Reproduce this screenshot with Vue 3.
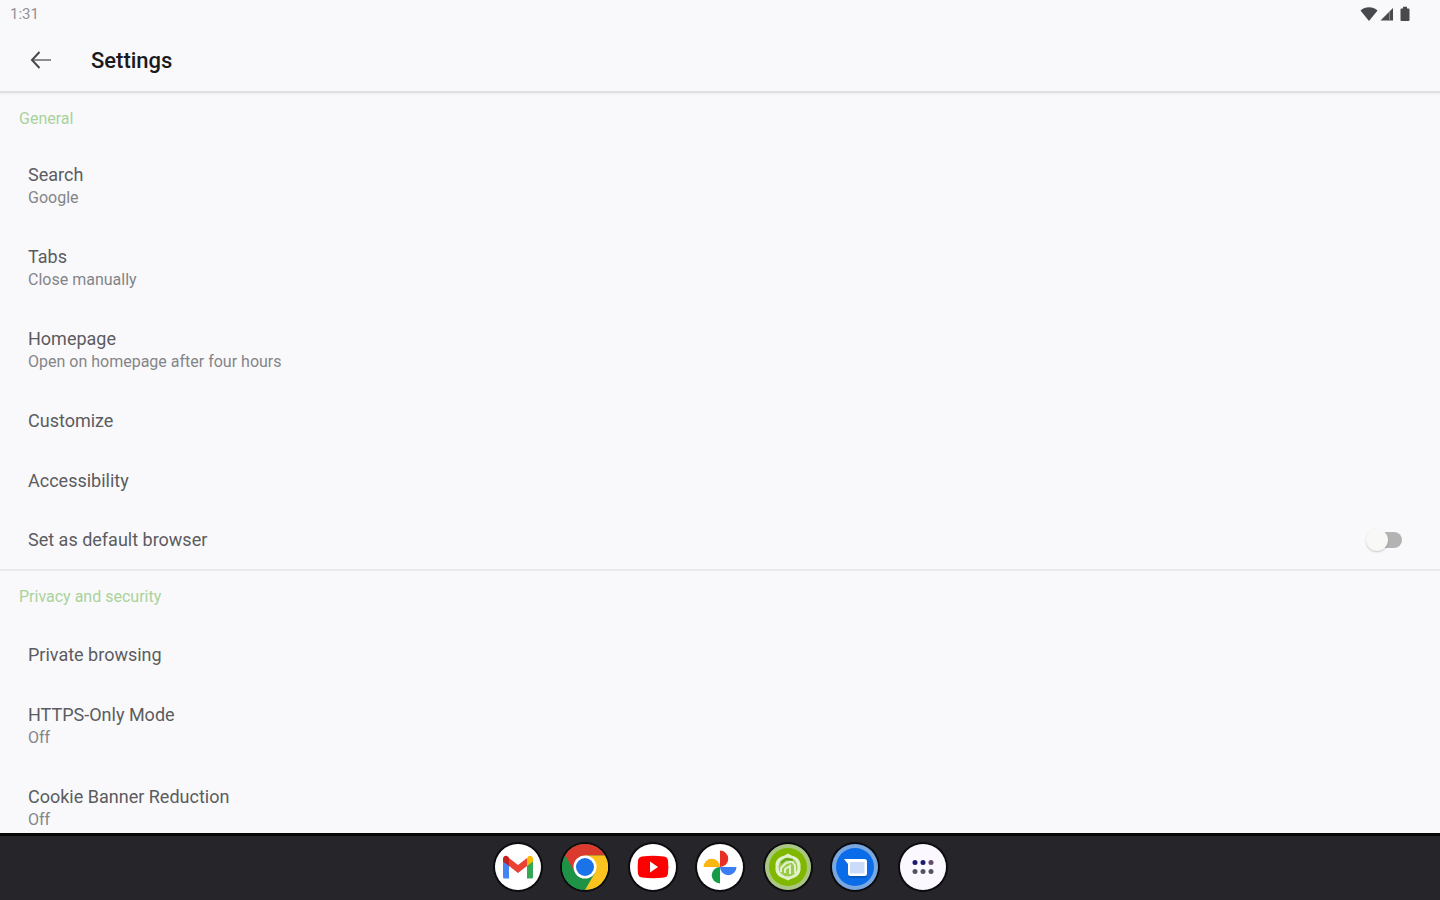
<script setup>
import { ref } from 'vue'

const isDefaultBrowser = ref(false)

const generalItems = [
  { title: 'Search', summary: 'Google' },
  { title: 'Tabs', summary: 'Close manually' },
  { title: 'Homepage', summary: 'Open on homepage after four hours' },
  { title: 'Customize' },
  { title: 'Accessibility' }
]

const privacyItems = [
  { title: 'Private browsing' },
  { title: 'HTTPS-Only Mode', summary: 'Off' },
  { title: 'Cookie Banner Reduction', summary: 'Off' }
]
</script>

<template>
  <div class="screen">
    <header class="header">
      <div class="status-bar">
        <span>1:31</span>
        <div class="status-icons">
          <svg width="18" height="16" viewBox="0 0 18 16" aria-hidden="true">
            <path d="M9 15 0.5 4.6C3 2.3 5.800 1.300 9 1.300s6 1 8.500 3.300z" />
          </svg>
          <svg width="14" height="16" viewBox="0 0 14 16" aria-hidden="true">
            <path d="M13 2v12.500H0.500z" />
            <path d="M9.500 6v8.500" stroke="#85868a" />
          </svg>
          <svg width="10" height="16" viewBox="0 0 10 16" aria-hidden="true">
            <path d="M3 0.800h4v1.700h1.500q1 0 1 1V14q0 1-1 1h-7q-1 0-1-1V3.500q0-1 1-1H3z" />
          </svg>
        </div>
      </div>
      <div class="toolbar">
        <button class="back" type="button" aria-label="Back">
          <svg width="22" height="22" viewBox="0 0 22 22" aria-hidden="true">
            <path class="arrow-line" d="M3 10h18" />
            <path class="arrow-head" d="M9.500 2 2 10l7.500 8" />
          </svg>
        </button>
        <h1>Settings</h1>
      </div>
    </header>

    <main class="content">
      <section>
        <h2>General</h2>
        <a v-for="item in generalItems" :key="item.title" class="row" href="#">
          <span class="title">{{ item.title }}</span>
          <span v-if="item.summary" class="summary">{{ item.summary }}</span>
        </a>
        <label class="row row-switch">
          <span class="title">Set as default browser</span>
          <input v-model="isDefaultBrowser" class="switch" type="checkbox" />
        </label>
      </section>

      <section>
        <h2>Privacy and security</h2>
        <a v-for="item in privacyItems" :key="item.title" class="row" href="#">
          <span class="title">{{ item.title }}</span>
          <span v-if="item.summary" class="summary">{{ item.summary }}</span>
        </a>
      </section>
    </main>

    <nav class="dock" aria-label="Apps">
      <div class="apps">
        <button type="button" aria-label="Gmail">
          <svg viewBox="0 0 46 46">
            <circle cx="23" cy="23" r="23" fill="#fff" />
            <path d="M8 15v18q0 1.500 1.500 1.500H14V19z" fill="#4285f4" />
            <path d="M32 19v15.500h4.500q1.500 0 1.500-1.500V15z" fill="#34a853" />
            <path d="M32 14.500v7.500l6-4.500V15c0-3-3-4-5-2.500z" fill="#fbbc04" />
            <path d="M14 22v-8l9 7 9-7v8l-9 7z" fill="#ea4335" />
            <path d="M8 15v2.500l6 4.500v-8l-1-1.500c-2-1.500-5-0.500-5 2.500z" fill="#c5221f" />
          </svg>
        </button>
        <button type="button" aria-label="Chrome">
          <svg viewBox="0 0 46 46">
            <circle cx="23" cy="23" r="23" fill="#1f9345" />
            <path d="M13 28.750 3.080 11.500A23 23 0 0 1 42.920 11.500H23z" fill="#db3a2f" />
            <path d="M3.080 11.500 13 28.750 23 34 20 45.800A23 23 0 0 1 3.080 11.500z" fill="#1f9345" />
            <path d="M42.920 11.500A23 23 0 0 1 23 46L33 28.750 23 11.500z" fill="#fcc31e" />
            <circle cx="23" cy="23" r="11.500" fill="#fff" />
            <circle cx="23" cy="23" r="9" fill="#1a73e8" />
          </svg>
        </button>
        <button type="button" aria-label="YouTube">
          <svg viewBox="0 0 46 46">
            <circle cx="23" cy="23" r="23" fill="#fff" />
            <path d="M12 12.500q11-1.500 22 0 3.500 0.500 4 4 0.800 6.500 0 13-0.500 3.500-4 4-11 1.500-22 0-3.500-0.500-4-4-0.800-6.500 0-13 0.500-3.500 4-4z" fill="#f00" />
            <path d="m20 17.500 8 5.500-8 5.500z" fill="#fff" />
          </svg>
        </button>
        <button type="button" aria-label="Photos">
          <svg viewBox="0 0 46 46">
            <circle cx="23" cy="23" r="23" fill="#fff" />
            <path d="M23 6.500a8.200 8.200 0 0 1 0 16.500z" fill="#ea2f25" />
            <path d="M39.500 23a8.200 8.200 0 0 1-16.500 0z" fill="#3c7df0" />
            <path d="M23 39.500a8.200 8.200 0 0 1 0-16.500z" fill="#169c46" />
            <path d="M6.500 23a8.200 8.200 0 0 1 16.500 0z" fill="#fbb612" />
          </svg>
        </button>
        <button type="button" aria-label="Browser">
          <svg viewBox="0 0 46 46">
            <circle cx="23" cy="23" r="23" fill="#a9c783" />
            <circle cx="23" cy="23" r="19" fill="#80b800" />
            <path d="m23 9.500 4 2.200c5 1 8 4.500 8.500 8.300v6c-0.500 4-4 7.500-8.500 8.500l-4 2-4-2c-4.500-1-8-4.500-8.500-8.500v-6c0.500-3.800 3.500-7.300 8.500-8.300z" fill="#e2f0cd" />
            <circle cx="23" cy="23" r="9.500" fill="#9bcb4a" />
            <path d="M16 28v-4l5-5 6-1.500 3 4V29M20 29v-4l5-3v8" fill="none" stroke="#e2f0cd" stroke-width="2" />
            <path d="m16 19 5-4 7 1" fill="none" stroke="#62a51c" stroke-width="2" />
          </svg>
        </button>
        <button type="button" aria-label="Messages">
          <svg viewBox="0 0 46 46">
            <circle cx="23" cy="23" r="23" fill="#79a7df" />
            <circle cx="23" cy="23" r="19" fill="#0b6cea" />
            <path d="M16 30h19v2q0 2-2 2H19q-3 0-3-3z" fill="#0759bf" />
            <path d="M12 15h20.500q2.500 0 2.500 2.500v12q0 2.500-2.500 2.500h-14Q16 32 16 29.500V20z" fill="#fff" />
            <path d="M18 18h14.500v11.500H18z" fill="#cbdcfb" />
          </svg>
        </button>
        <button type="button" aria-label="All apps">
          <svg viewBox="0 0 46 46">
            <circle cx="23" cy="23" r="23" fill="#fbf9ff" />
            <g fill="#1c1a72">
              <circle cx="15" cy="18.500" r="2.500" />
              <circle cx="23" cy="18.500" r="2.500" />
            </g>
            <circle cx="31" cy="18.500" r="2.500" fill="#67486f" />
            <g fill="#555263">
              <circle cx="15" cy="27.500" r="2.500" />
              <circle cx="23" cy="27.500" r="2.500" />
              <circle cx="31" cy="27.500" r="2.500" />
            </g>
          </svg>
        </button>
      </div>
    </nav>
  </div>
</template>

<style>
body {
  margin: 0;
  background: #f9f9fb;
}
</style>

<style scoped>
* {
  box-sizing: border-box;
}

.screen {
  height: 100vh;
  display: flex;
  flex-direction: column;
  background: #f9f9fb;
  color: #5b5c60;
  font-family: Roboto, sans-serif;
}

.header {
  flex: none;
  border-bottom: 2px solid #e0e0e2;
  box-shadow: 0 1px 2px rgba(0, 0, 0, 0.06);
}

.status-bar {
  height: 28px;
  padding: 0 30px 0 10px;
  display: flex;
  align-items: center;
  justify-content: space-between;
  color: #919195;
  font-size: 15px;
}

.status-icons {
  display: flex;
  gap: 2px;
  fill: #48494c;
}

.status-icons svg:last-child {
  margin-left: 4px;
}

.toolbar {
  padding: 18px 30px 15px;
  display: flex;
  align-items: center;
  gap: 39px;
}

.back {
  display: flex;
  padding: 0;
  border: 0;
  background: none;
  cursor: pointer;
}

.back path {
  fill: none;
  stroke-width: 2;
}

.arrow-line {
  stroke: #8d8e92;
}

.arrow-head {
  stroke: #47484b;
}

h1 {
  margin: 0;
  color: #1b1b1e;
  font-size: 22px;
  font-weight: 500;
  line-height: 30px;
}

.content {
  flex: 1;
  min-height: 0;
  overflow: hidden;
}

section + section {
  border-top: 2px solid #e9e9eb;
}

h2 {
  margin: 0;
  padding: 0 19px;
  color: #a9d29b;
  font-size: 16px;
  font-weight: 400;
  line-height: 52px;
}

section + section h2 {
  padding-bottom: 2px;
}

.row {
  display: flex;
  flex-direction: column;
  padding: 18px 28px;
  color: inherit;
  text-decoration: none;
}

.title {
  font-size: 18px;
  line-height: 24px;
}

.summary {
  color: #848589;
  font-size: 16px;
  line-height: 22px;
}

.row-switch {
  flex-direction: row;
  align-items: center;
  justify-content: space-between;
  padding: 17px 38px 17px 28px;
  cursor: pointer;
}

.switch {
  appearance: none;
  position: relative;
  width: 34px;
  height: 16px;
  margin: 0;
  border-radius: 8px;
  background: #b3b3b4;
  cursor: pointer;
}

.switch::before {
  content: '';
  position: absolute;
  top: -3px;
  left: -2px;
  width: 22px;
  height: 22px;
  border-radius: 50%;
  background: #f8f8f7;
  box-shadow: 0 1px 2px rgba(0, 0, 0, 0.2);
}

.switch:checked::before {
  left: 14px;
}

.dock {
  flex: none;
  height: 67px;
  padding-bottom: 2px;
  display: flex;
  align-items: center;
  justify-content: center;
  border-top: 3px solid #060607;
  background: #26262a;
}

.apps {
  width: 451px;
  display: flex;
  justify-content: space-between;
}

.apps button {
  width: 46px;
  height: 46px;
  padding: 0;
  border: 0;
  border-radius: 50%;
  background: none;
  box-shadow: 0 0 0 2px #0c0c10;
  cursor: pointer;
}

.apps svg {
  display: block;
  width: 100%;
  height: 100%;
}
</style>
